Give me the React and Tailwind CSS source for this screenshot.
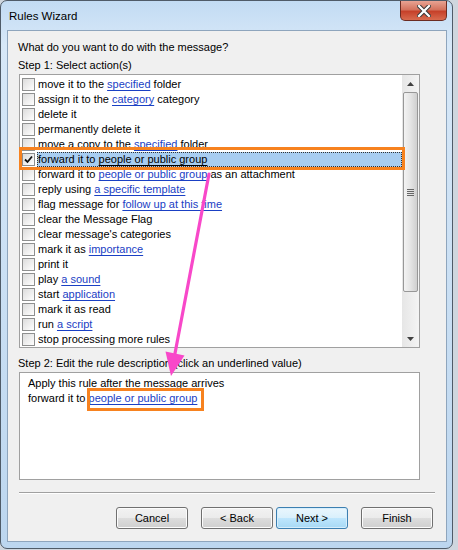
import React from 'react';

const FONT = { fontFamily: '"Liberation Sans", Arial, sans-serif' };

const ACTIONS = [
  [['move it to the '], ['specified', 1], [' folder']],
  [['assign it to the '], ['category', 1], [' category']],
  [['delete it']],
  [['permanently delete it']],
  [['move a copy to the '], ['specified', 1], [' folder']],
  [['forward it to '], ['people or public group', 1]],
  [['forward it to '], ['people or public group', 1], [' as an attachment']],
  [['reply using '], ['a specific template', 1]],
  [['flag message for '], ['follow up at this time', 1]],
  [['clear the Message Flag']],
  [["clear message's categories"]],
  [['mark it as '], ['importance', 1]],
  [['print it']],
  [['play '], ['a sound', 1]],
  [['start '], ['application', 1]],
  [['mark it as read']],
  [['run '], ['a script', 1]],
  [['stop processing more rules']],
];

function Checkbox({ checked }) {
  return (
    <span className="w-[13px] h-[13px] shrink-0 border border-[#8e8f8f] bg-gradient-to-br from-[#dcdcdc] to-white flex items-center justify-center">
      {checked && (
        <svg width="9" height="9" viewBox="0 0 9 9">
          <path d="M1 4.5 L3.5 7 L8 1.5" fill="none" stroke="#111" strokeWidth="1.8" />
        </svg>
      )}
    </span>
  );
}

function ActionRow({ parts, selected }) {
  return (
    <div className="h-[15px] flex items-center pl-[2px]">
      <Checkbox checked={selected} />
      <div
        className={
          'ml-[2px] h-[15px] leading-[15px] pl-px whitespace-pre ' +
          (selected ? 'flex-1 bg-[#a8cdf1] outline-1 outline-dotted outline-[#333] -outline-offset-1' : '')
        }
      >
        {parts.map(([t, link], i) =>
          link ? (
            <span key={i} className={'underline underline-offset-[2px] ' + (selected ? 'text-black' : 'text-[#1a40c4]')}>
              {t}
            </span>
          ) : (
            <span key={i}>{t}</span>
          )
        )}
      </div>
    </div>
  );
}

function Scrollbar() {
  return (
    <div className="w-[17px] h-full bg-gradient-to-r from-[#e6e6e6] to-[#f4f4f4] flex flex-col items-center">
      <div className="h-[17px] w-full flex items-center justify-center">
        <svg width="7" height="4" viewBox="0 0 7 4"><path d="M0 4 L3.5 0 L7 4 Z" fill="#404040" /></svg>
      </div>
      <div className="w-[15px] h-[200px] rounded-[2px] border border-[#979797] bg-gradient-to-r from-[#f3f3f3] via-[#e4e4e4] to-[#cfcfcf] flex flex-col items-center justify-center gap-px">
        <span className="w-[7px] h-px bg-[#666]" />
        <span className="w-[7px] h-px bg-[#666]" />
        <span className="w-[7px] h-px bg-[#666]" />
        <span className="w-[7px] h-px bg-[#666]" />
      </div>
      <div className="flex-1" />
      <div className="h-[17px] w-full flex items-center justify-center">
        <svg width="7" height="4" viewBox="0 0 7 4"><path d="M0 0 L7 0 L3.5 4 Z" fill="#404040" /></svg>
      </div>
    </div>
  );
}

function Button({ children, primary }) {
  return (
    <button
      className={
        'w-[72px] h-[22px] rounded-[3px] border text-[11px] text-black flex items-center justify-center ' +
        (primary
          ? 'border-[#3c7fb1] bg-[linear-gradient(#eaf6fd_0%,#d9f0fc_50%,#bee6fd_51%,#a7d9f5_100%)] shadow-[inset_0_0_0_1px_#d6eefc]'
          : 'border-[#707070] bg-[linear-gradient(#f2f2f2_0%,#ebebeb_50%,#dddddd_51%,#cfcfcf_100%)] shadow-[inset_0_0_0_1px_#fcfcfc]')
      }
      style={FONT}
    >
      {children}
    </button>
  );
}

export default function App() {
  return (
    <div className="w-[458px] h-[550px] bg-[#cfd6de] overflow-hidden text-[11px] text-black" style={FONT}>
      <div className="relative w-[453px] h-[549px] rounded-[7px] border border-[#4f5b68] bg-[linear-gradient(180deg,#c2dbf3_0%,#d7e8f8_8%,#bcd6ef_100%)] flex flex-col">
        {/* title bar */}
        <div className="h-[29px] flex items-start">
          <span className="ml-[8px] mt-[7px] text-[11.5px] leading-[16px]">Rules Wizard</span>
          <div className="ml-auto mr-[5px] w-[47px] h-[20px] rounded-b-[5px] border border-[#6b2c22] border-t-0 bg-[linear-gradient(#e8a393_0%,#d4735e_45%,#c6412a_55%,#d86b4f_100%)] flex items-center justify-center">
            <svg width="14" height="12" viewBox="0 0 14 12">
              <path d="M2 1 L12 11 M12 1 L2 11" stroke="#3a3a3a" strokeWidth="4.2" strokeLinecap="square" />
              <path d="M2 1 L12 11 M12 1 L2 11" stroke="#fff" strokeWidth="2.2" strokeLinecap="square" />
            </svg>
          </div>
        </div>

        {/* client area */}
        <div className="ml-[6px] w-[440px] h-[512px] border border-[#8ea5bd] bg-[#f0f0f0] flex flex-col">
          <div className="pl-[10px] pt-[8px] h-[24px] leading-[16px]">What do you want to do with the message?</div>
          <div className="pl-[10px] mt-[2px] h-[16px] leading-[16px]">Step 1: Select action(s)</div>

          <div className="relative ml-[11px] mt-px w-[401px] h-[274px] border border-[#a0a0a0] bg-white flex">
            <div className="flex-1 pt-[2px] overflow-hidden">
              {ACTIONS.map((parts, i) => (
                <ActionRow key={i} parts={parts} selected={i === 5} />
              ))}
            </div>
            <Scrollbar />
            <div className="absolute left-[-1px] top-[72px] w-[386px] h-[23px] border-[3px] border-[#f7821f]" />
          </div>

          <div className="pl-[10px] mt-[7px] h-[16px] leading-[16px]">Step 2: Edit the rule description (click an underlined value)</div>
          <div className="relative ml-[11px] mt-px w-[401px] h-[108px] border border-[#a0a0a0] bg-white pl-[8px] pt-[3px] leading-[15px]">
            <div>Apply this rule after the message arrives</div>
            <div className="whitespace-pre">
              forward it to <span className="text-[#1a40c4] underline underline-offset-[2px]">people or public group</span>
            </div>
            <div className="absolute left-[67px] top-[15px] w-[117px] h-[23px] border-[3px] border-[#f7821f]" />
          </div>

          <div className="ml-[11px] mt-[12px] w-[416px] h-px bg-[#a0a0a0] border-b border-white box-content" />

          <div className="mt-[13px] flex pl-[108px]">
            <Button>Cancel</Button>
            <div className="ml-[13px] flex gap-[3px]">
              <Button>&lt; Back</Button>
              <Button primary>Next &gt;</Button>
            </div>
            <div className="ml-[13px]">
              <Button>Finish</Button>
            </div>
          </div>
        </div>

        {/* pink annotation arrow */}
        <svg className="absolute left-0 top-0 pointer-events-none" width="453" height="549" viewBox="0 0 453 549">
          <path d="M208 173 L173.5 355" stroke="#f848c9" strokeWidth="3.2" strokeLinecap="round" fill="none" />
          <path d="M170 375 L164.5 350.5 L183.5 354.5 Z" fill="#f848c9" />
        </svg>
      </div>
    </div>
  );
}
